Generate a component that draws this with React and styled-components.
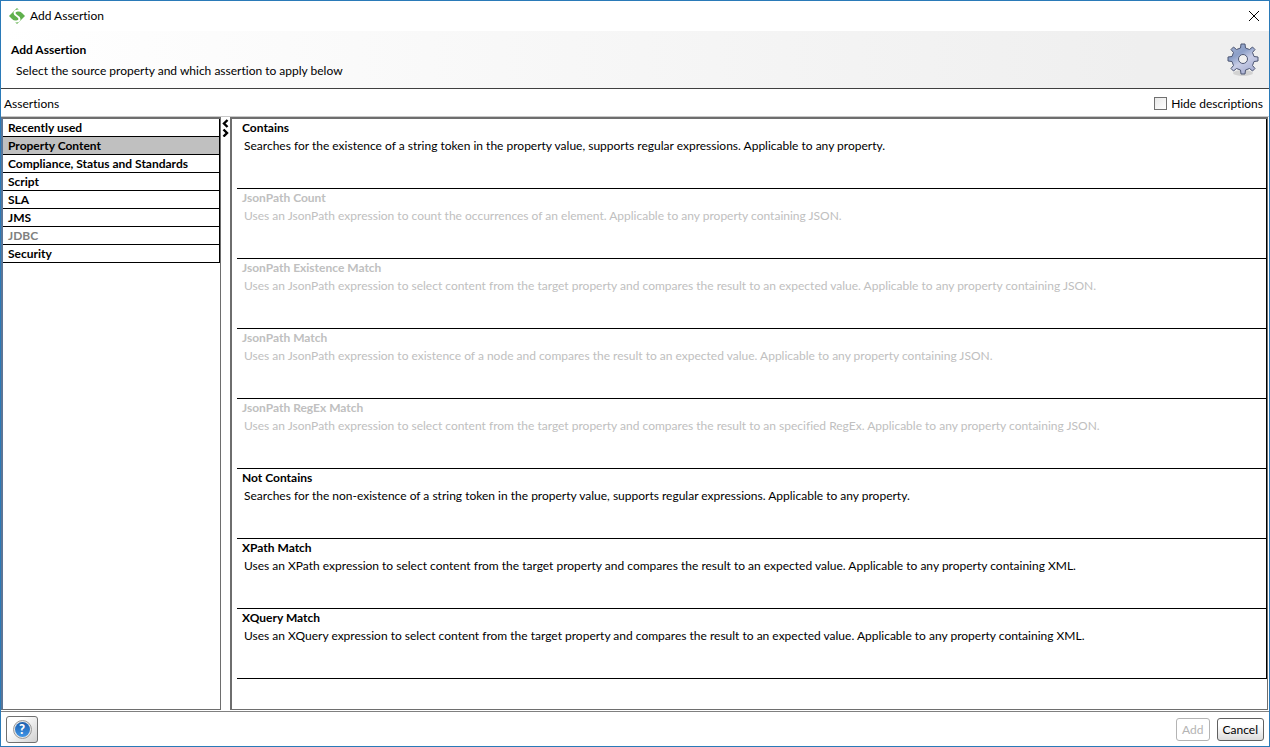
import React, { useState } from 'react'
import styled, { createGlobalStyle } from 'styled-components'

const categories = [
  { name: 'Recently used' },
  { name: 'Property Content' },
  { name: 'Compliance, Status and Standards' },
  { name: 'Script' },
  { name: 'SLA' },
  { name: 'JMS' },
  { name: 'JDBC', disabled: true },
  { name: 'Security' },
]

const assertions = [
  {
    name: 'Contains',
    text: 'Searches for the existence of a string token in the property value, supports regular expressions. Applicable to any property.',
  },
  {
    name: 'JsonPath Count',
    text: 'Uses an JsonPath expression to count the occurrences of an element. Applicable to any property containing JSON.',
    disabled: true,
  },
  {
    name: 'JsonPath Existence Match',
    text: 'Uses an JsonPath expression to select content from the target property and compares the result to an expected value. Applicable to any property containing JSON.',
    disabled: true,
  },
  {
    name: 'JsonPath Match',
    text: 'Uses an JsonPath expression to existence of a node and compares the result to an expected value. Applicable to any property containing JSON.',
    disabled: true,
  },
  {
    name: 'JsonPath RegEx Match',
    text: 'Uses an JsonPath expression to select content from the target property and compares the result to an specified RegEx. Applicable to any property containing JSON.',
    disabled: true,
  },
  {
    name: 'Not Contains',
    text: 'Searches for the non-existence of a string token in the property value, supports regular expressions. Applicable to any property.',
  },
  {
    name: 'XPath Match',
    text: 'Uses an XPath expression to select content from the target property and compares the result to an expected value. Applicable to any property containing XML.',
  },
  {
    name: 'XQuery Match',
    text: 'Uses an XQuery expression to select content from the target property and compares the result to an expected value. Applicable to any property containing XML.',
  },
]

function LogoIcon() {
  return (
    <svg width="16" height="16" viewBox="0 0 16 16">
      <path fill="#5fb04c" d="M8 0 L16 8 L8 16 L0 8 Z" />
      <path
        fill="none"
        stroke="#fff"
        strokeWidth="2"
        d="M14 4 C11 1.500 5.500 2 5.500 5 C5.500 8 10.500 8 10.500 11 C10.500 14 5 14.500 2 12"
      />
    </svg>
  )
}

function GearIcon() {
  return (
    <svg width="32" height="34" viewBox="0 0 32 34">
      <defs>
        <linearGradient id="gear" x1="0" y1="0" x2="0.6" y2="1">
          <stop offset="0" stopColor="#a5b4d2" />
          <stop offset="0.4" stopColor="#8c9fc8" />
          <stop offset="0.65" stopColor="#c8cde6" />
          <stop offset="1" stopColor="#a9b0d3" />
        </linearGradient>
      </defs>
      <ellipse cx="16" cy="30" rx="10" ry="3" fill="#000" opacity="0.12" />
      <g stroke="#4d5673" strokeLinejoin="round">
        <path
          fill="url(#gear)"
          d="M14 1 H18 L18.500 5 L22.500 6.500 L25.500 4 L28 6.500 L25.500 9.500 L27 13.500 L31 14 V18 L27 18.500 L25.500 22.500 L28 25.500 L25.500 28 L22.500 25.500 L18.500 27 L18 31 H14 L13.500 27 L9.500 25.500 L6.500 28 L4 25.500 L6.500 22.500 L5 18.500 L1 18 V14 L5 13.500 L6.500 9.500 L4 6.500 L6.500 4 L9.500 6.500 L13.500 5 Z"
        />
        <circle cx="16" cy="16" r="4.500" fill="#f0f0f0" />
      </g>
    </svg>
  )
}

function HelpIcon() {
  return (
    <HelpBadge>
      <span>?</span>
    </HelpBadge>
  )
}

function App() {
  const [selected, setSelected] = useState('Property Content')
  const [hidden, setHidden] = useState(false)

  return (
    <Window>
      <GlobalStyle />
      <TitleBar>
        <LogoIcon />
        <span>Add Assertion</span>
        <CloseButton aria-label="Close">
          <svg width="12" height="12" viewBox="0 0 12 12">
            <path d="M1 1 L11 11 M11 1 L1 11" stroke="#000" />
          </svg>
        </CloseButton>
      </TitleBar>
      <Header>
        <div>
          <Heading>Add Assertion</Heading>
          <Intro>Select the source property and which assertion to apply below</Intro>
        </div>
        <GearIcon />
      </Header>
      <Toolbar>
        <span>Assertions</span>
        <CheckLabel>
          <Checkbox type="checkbox" checked={hidden} onChange={(e) => setHidden(e.target.checked)} />
          Hide descriptions
        </CheckLabel>
      </Toolbar>
      <Body>
        <Sidebar>
          {categories.map((c) => (
            <Category
              key={c.name}
              disabled={c.disabled}
              $selected={c.name === selected}
              onClick={() => setSelected(c.name)}
            >
              {c.name}
            </Category>
          ))}
        </Sidebar>
        <Divider>
          <svg width="7" height="18" viewBox="0 0 7 18">
            <path d="M5.500 1 L2 4.500 L5.500 8 M1.500 10.500 L5 14 L1.500 17.500" fill="none" stroke="#000" strokeWidth="2.4" />
          </svg>
        </Divider>
        <Content>
          {assertions.map((a) => (
            <Assertion key={a.name} disabled={a.disabled}>
              <strong>{a.name}</strong>
              {!hidden && <Description>{a.text}</Description>}
            </Assertion>
          ))}
        </Content>
      </Body>
      <Footer>
        <HelpButton aria-label="Help">
          <HelpIcon />
        </HelpButton>
        <Actions>
          <FooterButton disabled>Add</FooterButton>
          <FooterButton>Cancel</FooterButton>
        </Actions>
      </Footer>
    </Window>
  )
}

export default App

const GlobalStyle = createGlobalStyle`
  * {
    box-sizing: border-box;
  }

  body {
    margin: 0;
    background: #fff;
    color: #000;
    font-family: Lato, "Open Sans", sans-serif;
    font-size: 12px;
    font-variant-ligatures: none;
    line-height: 18px;
  }

  button {
    font: inherit;
    font-variant-ligatures: none;
    color: inherit;
  }
`

const Window = styled.div`
  display: flex;
  flex-direction: column;
  min-height: 100vh;
  border: 1px solid #2a7ab8;
`

const TitleBar = styled.div`
  display: flex;
  align-items: center;
  gap: 5px;
  height: 30px;
  padding: 0 9px 1px 8px;
`

const CloseButton = styled.button`
  display: flex;
  margin-left: auto;
  padding: 0;
  border: none;
  background: none;
`

const Header = styled.header`
  display: flex;
  align-items: center;
  justify-content: space-between;
  height: 58px;
  padding: 1px 10px 0;
  border-bottom: 1px solid #404040;
  background: linear-gradient(to right, #fff, #efefef 90%);
`

const Heading = styled.h1`
  margin: 0 0 3px;
  font-size: 12px;
`

const Intro = styled.p`
  margin: 0;
  padding-left: 5px;
`

const Toolbar = styled.div`
  display: flex;
  align-items: center;
  justify-content: space-between;
  height: 28px;
  padding: 2px 6px 0 3px;
  border-bottom: 1px solid #c8c8c8;
`

const CheckLabel = styled.label`
  display: flex;
  align-items: center;
  gap: 4px;
`

const Checkbox = styled.input`
  appearance: none;
  width: 13px;
  height: 13px;
  margin: 0;
  border: 1px solid #707070;
  background: linear-gradient(135deg, #e8e8e8, #fff);

  &:checked {
    background: #404040;
  }
`

const Body = styled.main`
  display: flex;
  flex: 1;
  padding: 0 1px 1px 0;
`

const Sidebar = styled.nav`
  width: 220px;
  border: 1px solid #6e6e6e;
  border-top-width: 2px;
  border-left: 2px solid #5b7596;
`

const Category = styled.button`
  display: block;
  width: 100%;
  height: 18px;
  padding: 0 5px;
  border: solid #000;
  border-width: 0 1px 1px 0;
  background: ${(props) => (props.$selected ? '#c0c0c0' : '#fff')};
  font-weight: bold;
  line-height: 17px;
  text-align: left;

  &:disabled {
    color: #808080;
  }
`

const Divider = styled.div`
  display: flex;
  justify-content: center;
  width: 9px;
  padding-top: 2px;
`

const Content = styled.section`
  flex: 1;
  padding-left: 5px;
  border: 1px solid #6e6e6e;
  border-top-width: 2px;
  border-left-width: 2px;
`

const Assertion = styled.button`
  display: block;
  width: 100%;
  min-height: 70px;
  padding: 0 5px 33px;
  border: solid #000;
  border-width: 0 1px 1px 0;
  background: #fff;
  text-align: left;

  &:disabled {
    color: #c0c0c0;
  }

  strong {
    display: block;
  }
`

const Description = styled.span`
  display: block;
  padding-left: 2px;
`

const Footer = styled.footer`
  display: flex;
  align-items: center;
  justify-content: space-between;
  height: 35px;
  padding: 1px 5px 0;
  border-top: 1px solid #808080;
`

const HelpButton = styled.button`
  display: flex;
  align-items: center;
  justify-content: center;
  width: 32px;
  height: 27px;
  padding: 0;
  border: 1px solid #707070;
  border-radius: 3px;
  background: linear-gradient(135deg, #fff 30%, #d0d0d0);
`

const HelpBadge = styled.span`
  display: flex;
  align-items: center;
  justify-content: center;
  width: 19px;
  height: 19px;
  border: 1px solid #9a9a9a;
  border-radius: 50%;
  background: #e6e6e6;

  span {
    width: 15px;
    height: 15px;
    border-radius: 50%;
    background: linear-gradient(#1d5fae, #3f95e6);
    color: #fff;
    font-size: 13px;
    font-weight: 900;
    line-height: 15px;
    text-align: center;
  }
`

const Actions = styled.div`
  display: flex;
  gap: 7px;
`

const FooterButton = styled.button`
  height: 23px;
  padding: 0 5px;
  border: 1px solid #606060;
  border-radius: 3px;
  background: linear-gradient(#fff 30%, #dcdcdc);

  &:disabled {
    border-color: #b4b4b4;
    background: #fff;
    color: #b4b4b4;
  }
`
